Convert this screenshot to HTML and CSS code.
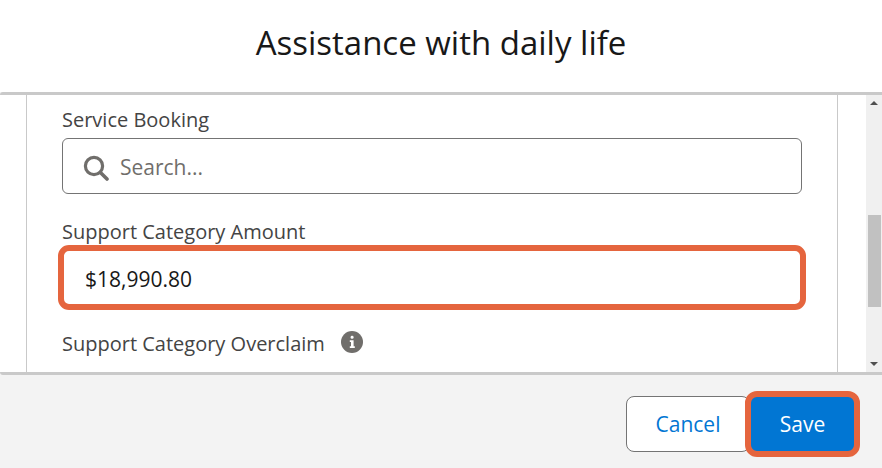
FILE: index.html
```html
<!DOCTYPE html>
<html lang="en">
<head>
    <meta charset="UTF-8">
    <title>Assistance with daily life</title>
    <link rel="stylesheet" href="styles.css">
</head>
<body>
    <header class="modal-header">
        <h2>Assistance with daily life</h2>
    </header>

    <main class="modal-body">
        <div class="content">
            <div class="form">
                <label class="field-label label-first">Service Booking</label>
                <div class="input">
                    <svg class="search-icon" width="26" height="26" viewBox="0 0 26 26">
                        <circle cx="11" cy="11" r="8.6" fill="none" stroke="#706e6b" stroke-width="3.2"/>
                        <path d="M17.4 17.4 L24 24" fill="none" stroke="#706e6b" stroke-width="3.6" stroke-linecap="round"/>
                    </svg>
                    <span class="placeholder">Search...</span>
                </div>

                <label class="field-label label-amount">Support Category Amount</label>
                <div class="input input-amount">$18,990.80</div>

                <div class="field-label label-overclaim">
                    Support Category Overclaim
                    <svg class="info-icon" width="22" height="22" viewBox="0 0 22 22">
                        <circle cx="11" cy="11" r="11" fill="#706e6b"/>
                        <rect x="9.6" y="4.8" width="3" height="3" rx="1.4" fill="#fff"/>
                        <path d="M8.8 9.2 H12.6 V15.2 H13.8 V17 H8.8 V15.2 H10 V11 H8.8 Z" fill="#fff"/>
                    </svg>
                </div>
            </div>
        </div>
        <div class="scrollbar">
            <span class="arrow arrow-up"></span>
            <div class="track"><div class="thumb"></div></div>
            <span class="arrow arrow-down"></span>
        </div>
    </main>

    <footer class="modal-footer">
        <button class="btn btn-cancel">Cancel</button>
        <button class="btn btn-save">Save</button>
    </footer>
</body>
</html>
```

FILE: styles.css
```css
* {
    margin: 0;
    padding: 0;
    box-sizing: border-box;
}
body {
    font-family: 'Open Sans', 'Noto Sans', sans-serif;
    width: 882px;
    height: 468px;
    overflow: hidden;
    background: #f3f3f3;
    color: #181818;
}
.modal-header {
    height: 92px;
    padding-bottom: 7px;
    background: #fff;
    display: flex;
    justify-content: center;
    align-items: center;
}
.modal-header h2 {
    font-size: 33px;
    font-weight: 400;
    color: #181818;
}
.modal-body {
    height: 283px;
    background: #fff;
    border-top: 3px solid #c9c9c9;
    border-bottom: 3px solid #c9c9c9;
    border-radius: 3px 0 0 3px;
    display: flex;
}
.content {
    width: 866px;
    padding-left: 26px;
    padding-right: 28px;
}
.form {
    height: 100%;
    padding: 0 35px;
    border-left: 1px solid #c9c9c9;
    border-right: 1px solid #c9c9c9;
}
.field-label {
    display: block;
    font-size: 20px;
    line-height: 28px;
    color: #444;
}
.label-first {
    padding-top: 11px;
}
.label-amount {
    margin-top: 24px;
}
.label-overclaim {
    display: flex;
    align-items: center;
    margin-top: 20px;
}
.input {
    width: 740px;
    height: 56px;
    margin-top: 4px;
    background: #fff;
    border: 1px solid #747474;
    border-radius: 6px;
    display: flex;
    align-items: center;
    padding-left: 20px;
    font-size: 21px;
}
.input-amount {
    width: 748px;
    height: 65px;
    margin: -1px 0 0 -4px;
    border: 6px solid #e5653e;
    border-radius: 11px;
    padding: 2px 0 0 21px;
    color: #181818;
}
.search-icon {
    flex: none;
    margin-top: 3px;
}
.placeholder {
    margin-left: 11px;
    padding-top: 2px;
    color: #706e6b;
}
.info-icon {
    margin-left: 16px;
    margin-bottom: 4px;
}
.scrollbar {
    width: 16px;
    background: #f0f0f0;
    display: flex;
    flex-direction: column;
    align-items: center;
}
.arrow {
    width: 0;
    height: 0;
    border-left: 4px solid transparent;
    border-right: 4px solid transparent;
}
.arrow-up {
    margin-top: 6px;
    border-bottom: 4px solid #505050;
}
.arrow-down {
    margin-bottom: 6px;
    border-top: 4px solid #505050;
}
.track {
    flex: 1;
    width: 100%;
    padding: 110px 1px 0 2px;
}
.thumb {
    height: 92px;
    background: #c1c1c1;
}
.modal-footer {
    height: 93px;
    display: flex;
    justify-content: flex-end;
    align-items: flex-start;
    padding: 16px 22px 0 0;
}
.btn {
    font-family: inherit;
    font-size: 21px;
    border-radius: 8px;
    cursor: pointer;
}
.btn-cancel {
    width: 124px;
    height: 56px;
    margin-top: 5px;
    margin-right: -5px;
    background: #fff;
    border: 1px solid #747474;
    color: #0176d3;
}
.btn-save {
    position: relative;
    width: 115px;
    height: 66px;
    background: #0176d3;
    border: 6px solid #e5653e;
    border-radius: 12px;
    color: #fff;
}
```
